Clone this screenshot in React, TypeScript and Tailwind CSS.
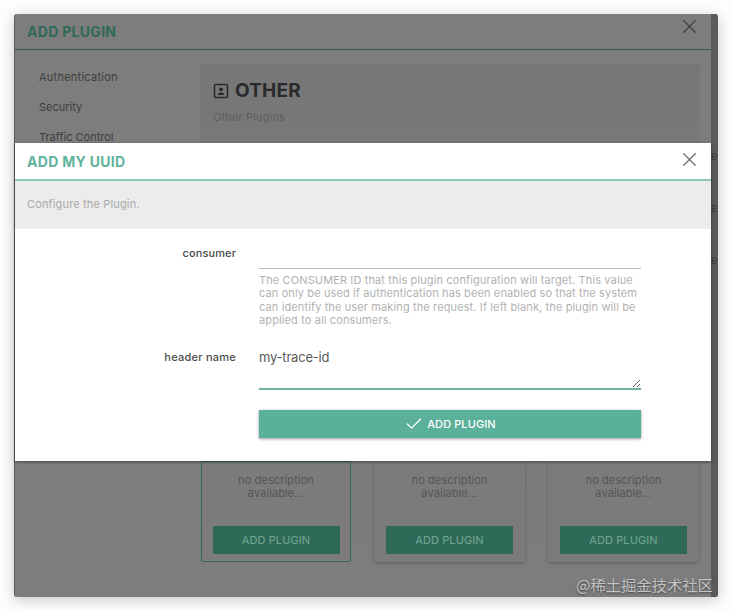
import React from "react";
import { X, Check } from "lucide-react";

const font = { fontFamily: "Inter, 'Noto Sans', 'Noto Sans CJK SC', sans-serif" };

function PluginCard({ active, width }: { active?: boolean; width: string }) {
  return (
    <div className={`${width} h-[101px] flex flex-col items-center rounded-[2px] border ${active ? "border-[#2f6a58]" : "border-transparent shadow-[0_1px_3px_rgba(0,0,0,0.25)] bg-[#7b7b7b]"}`}>
      <div className="pt-[12px] text-center text-[11px] leading-[12.5px] text-[#565656] w-[110px] tracking-[0.1px]">
        no description available...
      </div>
      <button className="mt-[27px] h-[28px] w-[127px] bg-[#2f6a58] text-[#6fa794] text-[11px] tracking-[0.1px]">ADD PLUGIN</button>
    </div>
  );
}

export default function App() {
  return (
    <div className="relative h-[611px] w-[732px] overflow-hidden bg-[#fdfdfd] pt-[14px] pl-[14px]" style={font}>
      <div className="relative h-[583px] w-[704px] rounded-[3px] bg-[#7d7d7d] border-l border-[#5a5a5a] shadow-[0_3px_14px_rgba(0,0,0,0.22)] flex flex-col overflow-hidden">
        <div className="h-[36px] shrink-0 flex items-center justify-between pl-[12px] pr-[10px] border-b border-[#2f5a4c] mr-[7px]">
          <span className="text-[14px] font-bold text-[#2f6a58] tracking-[0.3px]">ADD PLUGIN</span>
          <X size={23} strokeWidth={1.3} className="text-[#3f3f3f] -mt-[10px]" />
        </div>
        <div className="flex flex-1 min-h-0">
          <div className="w-[185px] shrink-0 pl-[24px] pt-[21px] flex flex-col gap-[17px] text-[11px] leading-[13px] text-[#3e3e3e]">
            <span className="tracking-[0.25px]">Authentication</span>
            <span>Security</span>
            <span>Traffic Control</span>
          </div>
          <div className="w-[500px] mt-[14px] bg-gradient-to-b from-[#777777] to-[#7d7d7d] pl-[13px] pt-[15px] flex flex-col">
            <div className="flex items-center gap-[6px]">
              <svg width="16" height="16" viewBox="0 0 16 16" fill="none" className="text-[#2a2a2a]">
                <rect x="1.5" y="1.5" width="13" height="13" rx="1" stroke="currentColor" strokeWidth="1.6" />
                <circle cx="8" cy="6.3" r="1.9" fill="currentColor" />
                <path d="M4.4 12c.4-1.9 1.8-2.6 3.6-2.6s3.2.7 3.6 2.6z" fill="currentColor" />
              </svg>
              <span className="text-[19px] leading-[24px] font-bold text-[#2a2a2a] tracking-[0.2px]">OTHER</span>
            </div>
            <span className="mt-[8px] text-[11px] leading-[13px] text-[#5e5e5e] tracking-[0.15px]">Other Plugins</span>
            <div className="mt-auto mb-[35px] -ml-[12px] flex gap-[23px]">
              <PluginCard active width="w-[150px]" />
              <PluginCard width="w-[151px]" />
              <PluginCard width="w-[151px]" />
            </div>
          </div>
        </div>
        <div className="absolute right-0 top-0 bottom-0 w-[7px] bg-[#5a5a5a]" />
      </div>

      <div className="absolute left-[711px] top-[150px] flex flex-col gap-[39px] text-[11px] leading-[13px] text-[#3a3a3a] w-[7px] overflow-hidden">
        <span>ec</span>
        <span>ec</span>
        <span>ec</span>
      </div>

      <div className="absolute left-[15px] top-[143px] h-[318px] w-[696px] bg-white shadow-[0_1px_3px_rgba(0,0,0,0.45)] flex flex-col">
        <div className="h-[38px] shrink-0 flex items-center justify-between pl-[12px] pr-[10px] border-b-2 border-[#8cc7b6]">
          <span className="text-[14px] font-bold text-[#5fb39c] tracking-[0.3px]">ADD MY UUID</span>
          <X size={23} strokeWidth={1.3} className="text-[#6b6b6b] -mt-[3px]" />
        </div>
        <div className="h-[48px] shrink-0 bg-[#ececec] flex items-center pl-[12px] pb-[2px] text-[11px] text-[#a9a9a9] tracking-[0.15px]">
          Configure the Plugin.
        </div>
        <div className="flex flex-col pt-[14px]">
          <div className="flex">
            <label className="w-[221px] shrink-0 text-right text-[11px] leading-[20px] font-medium text-[#4a4a4a] tracking-[0.1px]">consumer</label>
            <div className="ml-[23px] w-[382px]">
              <input readOnly defaultValue="" className="block h-[26px] w-full border-b border-[#b9b9b9] outline-none" />
              <p className="mt-[5px] text-[11px] leading-[13.3px] text-[#b2b2b2] tracking-[0.12px]">
                The CONSUMER ID that this plugin configuration will target. This value can only be used if authentication has been enabled so that the system can identify the user making the request. If left blank, the plugin will be applied to all consumers.
              </p>
            </div>
          </div>
          <div className="flex mt-[16px]">
            <label className="w-[221px] shrink-0 text-right text-[11px] leading-[20px] font-medium text-[#4a4a4a] pt-[4px] tracking-[0.25px]">header name</label>
            <div className="ml-[23px] w-[382px]">
              <textarea readOnly defaultValue="my-trace-id" className="block h-[47px] w-full border-b-2 border-[#6cb7a2] outline-none text-[13px] leading-[20px] pt-[4px] text-[#5a5a5a] tracking-[-0.2px]" />
              <button className="mt-[20px] h-[28px] w-full flex items-center justify-center gap-[3px] bg-[#5bb09a] text-white text-[11px] font-medium tracking-[0.1px] shadow-[0_1px_3px_rgba(0,0,0,0.4)]">
                <Check size={20} strokeWidth={1.5} />
                ADD PLUGIN
              </button>
            </div>
          </div>
        </div>
      </div>

      <div className="absolute left-[576px] top-[574px] text-[15.3px] leading-[20px] text-[#c4c4c4] [text-shadow:0_1px_2px_rgba(0,0,0,0.5)]" style={{ fontFamily: "'Noto Sans CJK SC', sans-serif" }}>
        @稀土掘金技术社区
      </div>
    </div>
  );
}
